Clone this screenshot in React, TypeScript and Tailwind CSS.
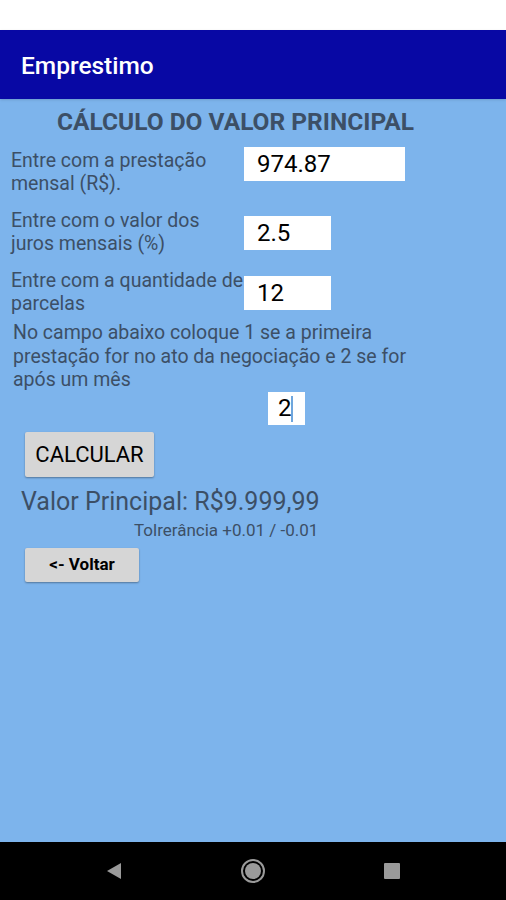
import React from "react";

const font = { fontFamily: "Roboto, 'Noto Sans', sans-serif" };

function Field({ value, w }: { value: string; w: string }) {
  return (
    <div className={`${w} h-[34px] shrink-0 bg-white flex items-center pl-[13px] text-[24px] text-black`}>
      {value}
    </div>
  );
}

export default function App() {
  return (
    <div className="w-[506px] h-[900px] flex flex-col bg-[#7db4ec]" style={font}>
      <div className="h-[30px] bg-white" />
      <div className="h-[69px] bg-[#0808a4] flex items-center px-[21px] pt-[3px] shadow-sm">
        <span className="text-white text-[24.5px] font-medium">Emprestimo</span>
      </div>

      <div className="flex-1 flex flex-col text-[#3c4f66]">
        <div className="text-center text-[24.5px] font-bold pt-[8px] pr-[35px] leading-[30px] whitespace-nowrap">
          CÁLCULO DO VALOR PRINCIPAL
        </div>

        <div className="flex items-start h-[34px] mt-[10px] ml-[11px]">
          <div className="w-[233px] text-[19.5px] leading-[23px] pt-[2px] whitespace-nowrap">
            Entre com a prestação
            <br />
            mensal (R$).
          </div>
          <Field value="974.87" w="w-[161px]" />
        </div>

        <div className="flex items-start h-[34px] mt-[35px] ml-[11px]">
          <div className="w-[233px] text-[19.5px] leading-[23px] -mt-[7px] whitespace-nowrap">
            Entre com o valor dos
            <br />
            juros mensais (%)
          </div>
          <Field value="2.5" w="w-[87px]" />
        </div>

        <div className="flex items-start h-[34px] mt-[26px] ml-[11px]">
          <div className="w-[233px] text-[19.5px] leading-[23px] -mt-[7px] whitespace-nowrap overflow-visible">
            Entre com a quantidade de
            <br />
            parcelas
          </div>
          <Field value="12" w="w-[87px]" />
        </div>

        <div className="ml-[13px] mt-[11px] text-[19.5px] leading-[23.5px] whitespace-nowrap">
          No campo abaixo coloque 1 se a primeira
          <br />
          prestação for no ato da negociação e 2 se for
          <br />
          após um mês
        </div>

        <div className="flex ml-[268px] mt-0">
          <div className="w-[37px] h-[33px] bg-white flex items-center pl-[10px] text-[24px] text-black relative">
            2
            <span className="absolute left-[23px] top-[4px] w-[1.5px] h-[26px] bg-[#6fa6dd]" />
          </div>
        </div>

        <div className="ml-[25px] mt-[7px]">
          <div className="w-[129px] h-[45px] bg-[#d6d6d6] rounded-[2px] shadow-[0_1px_2px_rgba(0,0,0,0.35)] flex items-center justify-center text-[22px] text-black">
            CALCULAR
          </div>
        </div>

        <div className="ml-[21px] mt-[9px] text-[25px] leading-[32px] whitespace-nowrap">
          Valor Principal: R$9.999,99
        </div>
        <div className="ml-[134px] mt-[2px] text-[17px] leading-[20px] whitespace-nowrap">
          Tolrerância +0.01 / -0.01
        </div>

        <div className="ml-[25px] mt-[8px]">
          <div className="w-[114px] h-[34px] bg-[#d6d6d6] rounded-[2px] shadow-[0_1px_2px_rgba(0,0,0,0.35)] flex items-center justify-center text-[17px] font-bold text-black">
            &lt;- Voltar
          </div>
        </div>
      </div>

      <div className="h-[58px] bg-black flex items-center justify-center gap-[118px]">
        <svg width="16" height="18" viewBox="0 0 16 18">
          <path d="M15 1 L1 9 L15 17 Z" fill="#9a9a9a" />
        </svg>
        <svg width="26" height="26" viewBox="0 0 26 26">
          <circle cx="13" cy="13" r="11" fill="none" stroke="#9a9a9a" strokeWidth="2" />
          <circle cx="13" cy="13" r="8" fill="#9a9a9a" />
        </svg>
        <svg width="16" height="16" viewBox="0 0 16 16">
          <rect x="0" y="0" width="16" height="16" rx="1" fill="#9a9a9a" />
        </svg>
      </div>
    </div>
  );
}
